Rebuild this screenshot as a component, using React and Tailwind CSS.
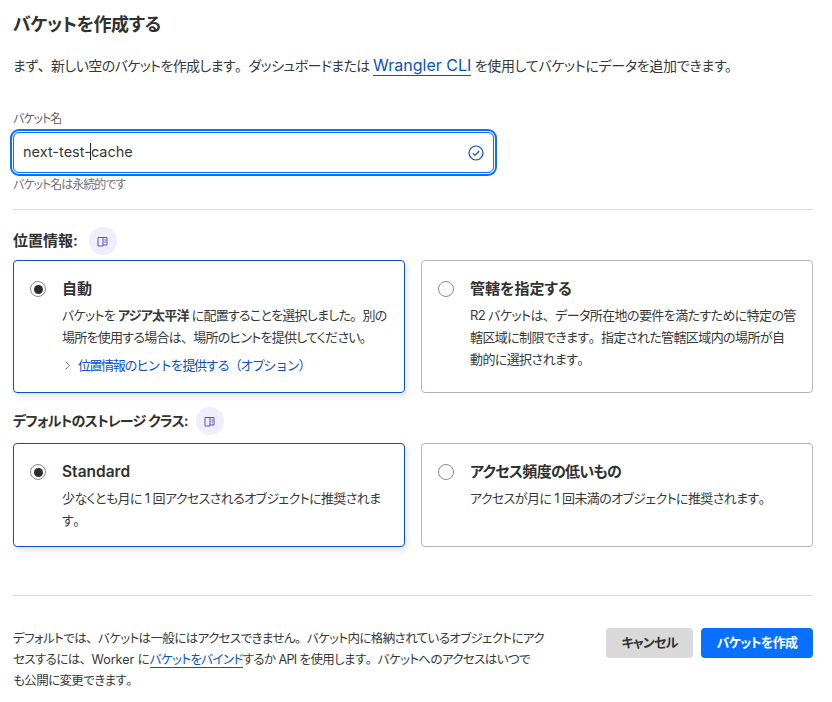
import React from 'react';

const font = 'font-["Inter","Noto_Sans_CJK_JP",sans-serif]';

// keeps 、 and 。 full width while the kana around them stay proportional
const Jp = ({ text }) =>
  text.split(/([、。])/).map((part, i) =>
    part === '、' || part === '。' ? (
      <span key={i} className="[font-feature-settings:normal]">{part}</span>
    ) : (
      part
    )
  );

const BookIcon = () => (
  <span className="flex h-7 w-7 items-center justify-center rounded-full bg-[#f0eefc]">
    <svg width="11" height="11" viewBox="0 0 11 11" fill="none" stroke="#5a50c8" strokeWidth="1">
      <path d="M1 1.5h5v8.5h-5z" />
      <path d="M6 1.5h4v7.5h-4" />
      <path d="M7.5 4h1.5M7.5 6h1.5" />
    </svg>
  </span>
);

const Radio = ({ checked }) => (
  <span className="mt-[3px] flex h-4 w-4 shrink-0 items-center justify-center rounded-full border border-[#8a8a8a] bg-white">
    {checked && <span className="h-[9px] w-[9px] rounded-full bg-[#2c2c2c]" />}
  </span>
);

const Card = ({ checked, title, titleClass, children, className }) => (
  <div
    className={`flex gap-[16px] rounded border px-[16px] pt-[17px] ${
      checked ? 'border-[#0a51c3] shadow-[2px_3px_6px_rgba(0,0,0,0.12)]' : 'border-[#b5b5b5]'
    } ${className}`}
  >
    <Radio checked={checked} />
    <div className="min-w-0 flex-1">
      <div className={`font-semibold leading-[22px] text-[#313131] ${titleClass}`}>{title}</div>
      <div className="mt-[4px] text-[13px] leading-[22px] tracking-[-0.6px] text-[#36393a]">{children}</div>
    </div>
  </div>
);

export default function App() {
  return (
    <div className={`${font} [font-feature-settings:"palt"] min-h-[702px] w-[832px] bg-white pl-[13px] pr-[19px] text-[#36393a]`}>
      <h1 className="pt-[13px] text-[18px] font-semibold leading-[24px] tracking-[-0.4px] text-[#313131]">バケットを作成する</h1>
      <p className="mt-[16px] text-[14px] leading-[24px] tracking-[-0.6px]">
        <Jp text="まず、新しい空のバケットを作成します。ダッシュボードまたは" />{' '}
        <a className="border-b border-[#0a51c3] text-[16px] tracking-normal text-[#0a51c3]">Wrangler CLI</a>{' '}
        <span className="tracking-[-0.3px]">を使用してバケットにデータを追加できます。</span>
      </p>

      <label className="mt-[33px] block text-[12px] leading-[16px] tracking-[-1px] text-[#5f5f5f]">バケット名</label>
      <div className="mt-[5px] flex h-[41px] w-[481px] items-center justify-between rounded-[6px] border border-[#086fff] pl-[9px] pr-[9px] ring-2 ring-[#086fff] ring-offset-1 ring-offset-white">
        <span className="relative pb-[1px] text-[14.5px] text-[#36393a]">
          next-test-
          <span className="absolute ml-[-0.5px] mt-[2px] h-[17px] w-px bg-[#222]" />
          cache
        </span>
        <svg width="16" height="16" viewBox="0 0 16 16" fill="none" stroke="#0a51c3" strokeWidth="1.2">
          <circle cx="8" cy="8" r="7" />
          <path d="M4.8 8.2l2.2 2.2 4.2-4.4" />
        </svg>
      </div>
      <div className="mt-[4px] text-[12px] leading-[16px] tracking-[-1px] text-[#6f6f6f]">バケット名は永続的です</div>

      <hr className="mt-[16px] border-[#d9d9d9]" />

      <div className="mt-[17px] flex items-center gap-[11px]">
        <span className="text-[15px] font-semibold leading-[28px] text-[#313131]">位置情報:</span>
        <BookIcon />
      </div>

      <div className="mt-[5px] grid grid-cols-2 gap-4">
        <Card checked title="自動" titleClass="text-[15px]" className="h-[133px]">
          <div className="tracking-[-0.75px]">
            バケットを <span className="font-semibold">アジア太平洋</span> に配置することを選択しました<Jp text="。別の場所を使用する場合は、場所のヒントを提供してください。" />
          </div>
          <div className="mt-[6px] flex items-center gap-[5px] text-[#0a51c3]">
            <svg width="11" height="11" viewBox="0 0 11 11" fill="none" stroke="#777" strokeWidth="1">
              <path d="M3.5 1.5l4 4-4 4" />
            </svg>
            <span className="[font-feature-settings:normal] tracking-[-1.4px]">位置情報のヒントを提供する（オプション）</span>
          </div>
        </Card>
        <Card title="管轄を指定する" titleClass="text-[15px]" className="h-[133px]">
          <Jp text="R2 バケットは、データ所在地の要件を満たすために特定の管轄区域に制限できます。指定された管轄区域内の場所が自動的に選択されます。" />
        </Card>
      </div>

      <div className="mt-[14px] flex items-center gap-[8px]">
        <span className="text-[14px] font-semibold leading-[28px] tracking-[-0.8px] text-[#313131]">デフォルトのストレージ クラス:</span>
        <BookIcon />
      </div>

      <div className="mt-[8px] grid grid-cols-2 gap-4">
        <Card checked title="Standard" titleClass="text-[15.5px]" className="h-[104px]">
          <Jp text="少なくとも月に 1 回アクセスされるオブジェクトに推奨されます。" />
        </Card>
        <Card title="アクセス頻度の低いもの" titleClass="text-[15px] tracking-[-0.7px]" className="h-[104px]">
          <Jp text="アクセスが月に 1 回未満のオブジェクトに推奨されます。" />
        </Card>
      </div>

      <hr className="mt-[48px] border-[#d9d9d9]" />

      <div className="mt-[32px] flex items-start justify-between">
        <p className="w-[532px] text-[12.5px] leading-[21px] tracking-[-0.6px] text-[#36393a]">
          <Jp text="デフォルトでは、バケットは一般にはアクセスできません。バケット内に格納されているオブジェクトにアクセスするには、" />
          <span className="tracking-normal">Worker に</span>
          <a className="border-b border-[#0a51c3] text-[#0a51c3]">バケットをバインド</a>
          <Jp text="するか API を使用します。バケットへのアクセスはいつで" />
          <br />
          <Jp text="も公開に変更できます。" />
        </p>
        <div className="flex gap-[8px]">
          <button className="h-[30px] w-[87px] rounded bg-[#d9d9d9] text-[13px] font-semibold tracking-[-0.8px] text-[#313131]">キャンセル</button>
          <button className="h-[30px] w-[112px] rounded bg-[#086fff] text-[13px] font-semibold tracking-[-0.7px] text-white">バケットを作成</button>
        </div>
      </div>
    </div>
  );
}
